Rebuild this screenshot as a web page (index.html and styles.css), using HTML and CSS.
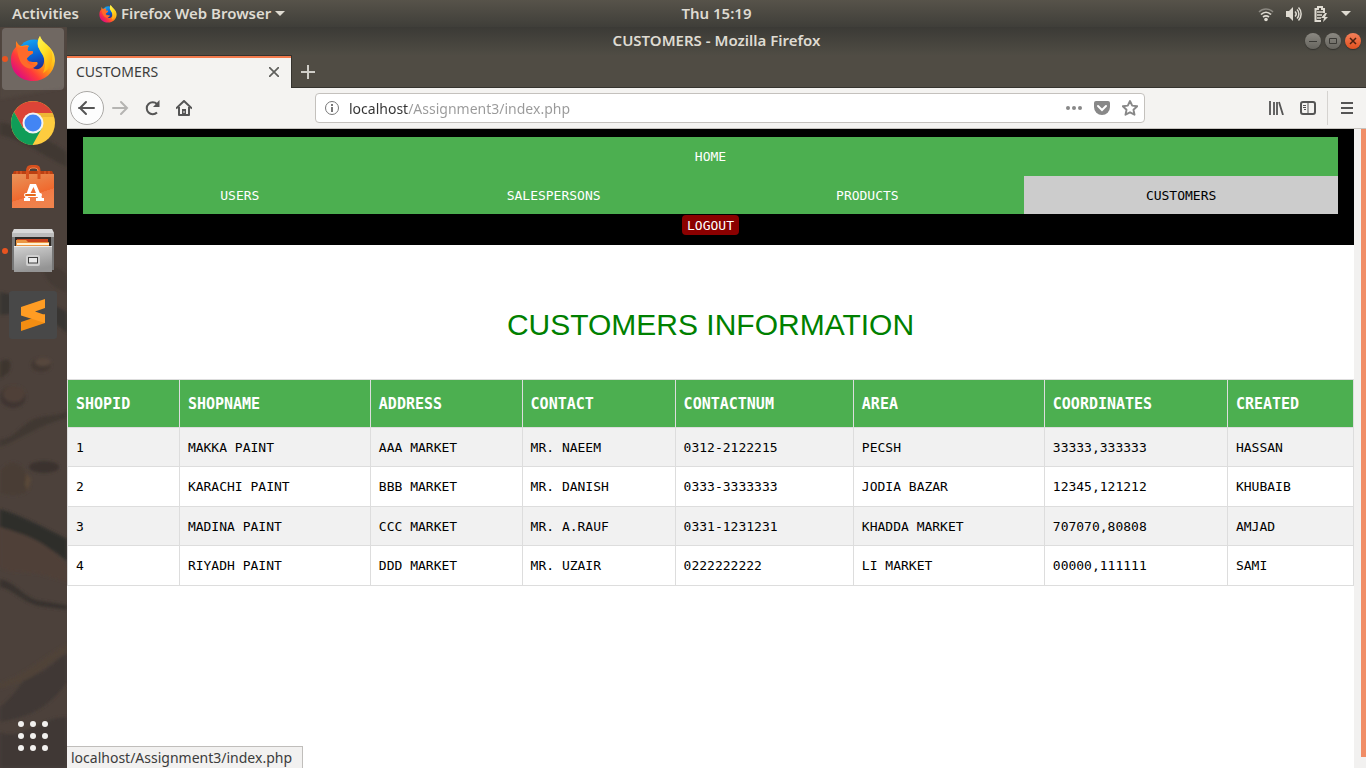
FILE: index.html
```html
<!DOCTYPE html>
<html lang="en">
<head>
<meta charset="utf-8">
<title>CUSTOMERS</title>
<link rel="stylesheet" href="styles.css">
</head>
<body>
<svg class="defs" aria-hidden="true">
  <defs>
    <linearGradient id="foxBody" x1="0.9" y1="0.1" x2="0.15" y2="0.85">
      <stop offset="0" stop-color="#fff04a"/><stop offset="0.3" stop-color="#ffc31a"/><stop offset="0.52" stop-color="#ff8a16"/><stop offset="0.75" stop-color="#ff3b3a"/><stop offset="1" stop-color="#e0107a"/>
    </linearGradient>
    <linearGradient id="foxTail" x1="0" y1="0" x2="0.6" y2="1">
      <stop offset="0" stop-color="#fff65a"/><stop offset="0.5" stop-color="#ffe226"/><stop offset="1" stop-color="#ffa90f"/>
    </linearGradient>
    <linearGradient id="globe" x1="0.3" y1="0" x2="0.6" y2="1">
      <stop offset="0" stop-color="#12a5f5"/><stop offset="0.5" stop-color="#0a5fd0"/><stop offset="1" stop-color="#2b1a78"/>
    </linearGradient>
    <linearGradient id="bag" x1="0" y1="0" x2="0.4" y2="1">
      <stop offset="0" stop-color="#e8945a"/><stop offset="0.7" stop-color="#f0692e"/><stop offset="0.71" stop-color="#f27a45"/><stop offset="1" stop-color="#f0824c"/>
    </linearGradient>
    <linearGradient id="metal" x1="0" y1="0" x2="0.3" y2="1">
      <stop offset="0" stop-color="#d2d2d2"/><stop offset="1" stop-color="#949494"/>
    </linearGradient>
    <filter id="soft"><feGaussianBlur stdDeviation="1.5"/></filter>
    <symbol id="firefox" viewBox="0 0 46 46">
      <circle cx="24" cy="21" r="17.5" fill="url(#globe)"/>
      <path d="M6 5C8 8 9 10 12 10C15 9 18 9 19 10C17 12 17 14 18 15L22 15C24 16 23 18 20 19L17 22C17 25 20 26 24 26L27 26C29 28 26 31 22 31C27 36 35 32 34 23C34 19 31 14 28 11C27 7 28 3 30 0C31 4 35 7 38 10C43 14 45 19 45 25C44 37 35 45 23 45C10 45 1 36 1 24C1 18 3 14 6 11Z" fill="url(#foxBody)"/>
      <path d="M30 0C31 4 35 7 38 10C42 14 43 18 42 24C41 31 37 35 33 37C36 31 36 24 32 18C28 12 26 6 30 0Z" fill="url(#foxTail)"/>
      <path d="M7 13C9 11 14 10 19 10C17 12 17 14 18 15L22 15C24 16 23 18 20 19L17 22C16 27 20 30 26 29C25 33 17 34 13 29C9 25 8 19 7 13Z" fill="#ff6a2a"/>
    </symbol>
  </defs>
</svg>

<div class="desktop">
  <header class="panel">
    <div class="panel-left">
      <button class="panel-btn">Activities</button>
      <button class="panel-btn app-menu">
        <svg width="18" height="18"><use href="#firefox"/></svg>
        Firefox Web Browser
        <svg width="10" height="5" viewBox="0 0 10 5"><path d="M0 0h10L5 5z" fill="#dfdbd2"/></svg>
      </button>
    </div>
    <button class="panel-btn clock">Thu 15:19</button>
    <div class="tray">
      <svg width="16" height="16" viewBox="0 0 16 16" fill="none" stroke="#dfdbd2" stroke-width="2"><path d="M1 6C5 2 11 2 15 6" stroke="#8b8881" stroke-width="1.5"/><path d="M3 8.500C6 5.500 10 5.500 13 8.500M5 11C7 9.500 9 9.500 11 11" stroke-width="1.700"/><circle cx="8" cy="13.500" r="1.800" fill="#dfdbd2" stroke="none"/></svg>
      <svg width="16" height="16" viewBox="0 0 16 16" fill="none" stroke="#dfdbd2" stroke-width="1.500"><path d="M0 5h3l4-4v14l-4-4H0z" fill="#dfdbd2" stroke="none"/><path d="M9 5.500C10.500 7 10.500 9 9 10.500M11 3.500C13.500 6 13.500 10 11 12.500M12.500 1.500C16 5 16 11 12.500 14.500"/></svg>
      <svg width="15" height="16" viewBox="0 0 15 16" fill="none" stroke="#dfdbd2" stroke-width="2"><path d="M10 7V3H8V1H4v2H1.500V15H7"/><path d="M3 6h6M3 9h5M3 12h4" stroke-width="1.500"/><path d="M11 7l-4 5h3l-1 4 5-5h-3l2-4z" fill="#dfdbd2" stroke="none"/></svg>
      <svg width="10" height="5" viewBox="0 0 10 5"><path d="M0 0h10L5 5z" fill="#dfdbd2"/></svg>
    </div>
  </header>

  <div class="workspace">
    <nav class="dock" aria-label="Launcher">
      <svg class="wallpaper" viewBox="0 0 67 741" preserveAspectRatio="none" aria-hidden="true">
        <rect width="67" height="741" fill="#4c413b"/>
        <g filter="url(#soft)">
          <path d="M0 0H67V60L0 72Z" fill="#514640"/>
          <path d="M0 95C25 100 45 110 67 125V140C45 130 20 112 0 108Z" fill="#403833"/>
          <path d="M0 265C14 270 26 262 67 285V306C48 288 25 285 0 288Z" fill="#393630"/>
          <path d="M42 238C52 240 65 240 67 250V265C55 262 45 255 42 238Z" fill="#443a34"/>
          <path d="M0 335C6 330 14 332 9 345L0 352Z" fill="#3d352f"/>
          <ellipse cx="41" cy="338" rx="10" ry="7" fill="#433832"/><ellipse cx="43" cy="335" rx="8" ry="4" fill="#56473e"/>
          <ellipse cx="13" cy="370" rx="13" ry="11" fill="#3f3630"/><ellipse cx="14" cy="367" rx="11" ry="8" fill="#4f4138"/>
          <path d="M0 412C14 414 22 394 40 390C52 388 62 388 67 384V391C40 397 20 413 0 420Z" fill="#413731"/>
          <ellipse cx="44" cy="440" rx="15" ry="6" fill="#3a322d"/>
          <path d="M0 444C12 430 20 434 28 450S18 472 0 466Z" fill="#483c35"/>
          <path d="M26 446L31 452 28 464 25 458Z" fill="#5a4839"/>
          <path d="M0 482C20 488 48 502 67 512V534C48 518 20 506 0 500Z" fill="#2f2f2a"/>
          <path d="M0 500C26 508 48 514 67 540V555L40 547C25 544 12 548 0 540Z" fill="#4f4037"/>
          <path d="M0 552C18 556 24 572 42 574L67 578V583L38 579C22 575 12 562 0 560Z" fill="#39332f"/>
          <path d="M0 680C24 660 16 655 35 648C50 642 56 632 67 627V655C50 680 30 690 0 695Z" fill="#3f3734"/>
          <path d="M67 625C50 634 45 643 28 652L0 662V656C25 648 40 632 67 617Z" fill="#504239"/>
          <path d="M0 705C20 715 40 690 67 690V741H0Z" fill="#413935"/>
        </g>
      </svg>
      <button class="dock-item active running" aria-label="Firefox"><svg width="46" height="46"><use href="#firefox"/></svg></button>
      <button class="dock-item" aria-label="Chrome">
        <svg width="46" height="46" viewBox="0 0 46 46">
          <circle cx="23" cy="23" r="22" fill="#fecc3f"/>
          <path d="M4 12A22 22 0 0 1 42.500 13H23L13 28Z" fill="#dc4437"/>
          <path d="M4 12A22 22 0 0 0 22.500 45L32 28 13 28Z" fill="#109d58"/>
          <path d="M23 13H42.500L44 17 30 17Z" fill="#e2a92e" opacity=".6"/>
          <circle cx="23" cy="23" r="10.500" fill="#f3f3f3"/><circle cx="23" cy="23" r="8.500" fill="#4285f4"/>
        </svg>
      </button>
      <button class="dock-item" aria-label="Ubuntu Software">
        <svg width="46" height="46" viewBox="0 0 46 46">
          <path d="M4 7H42L44 11H2Z" fill="#bb3f12"/><path d="M7 7V11M11 7V11M35 7V11M39 7V11" stroke="#e6632d"/>
          <path d="M2 10H44V44H2Z" fill="url(#bag)"/>
          <path d="M17.500 15V7Q17.500 2.500 21 2.500H26Q29 2.500 29 7V15" fill="none" stroke="#d6501e" stroke-width="3"/>
          <path d="M19 7Q19 4 22 4H25Q28 4 28 7" fill="none" stroke="#f08550"/>
          <path d="M20 20H26L32 34H34V37H26V34H28L23.500 23 18 34H20V37H14V34H15Z" fill="#fff"/>
          <rect x="14" y="29" width="18" height="4" rx="2" fill="#fff"/><rect x="15" y="30" width="11" height="2" rx="1" fill="#e56a19"/>
        </svg>
      </button>
      <button class="dock-item running" aria-label="Files">
        <svg width="46" height="46" viewBox="0 0 46 46">
          <path d="M4 1H42L44 5V42H2V5Z" fill="#777"/><path d="M4 1H42L44 5H2Z" fill="#d8d8d8"/><path d="M2 5H44V9H2Z" fill="#bcbcbc"/>
          <rect x="5" y="9" width="36" height="13" fill="#2d2926"/>
          <path d="M7 11H38V20H6Z" fill="#c8421c"/><path d="M6 12H16L18 14H39V20H6Z" fill="#eb9642"/><path d="M7 15H39V17H7Z" fill="#fff1d5"/>
          <path d="M4 18H42V44H4Z" fill="url(#metal)"/><path d="M4 18.500H42" stroke="#eee"/>
          <rect x="16" y="27" width="14" height="11" rx="2" fill="#d0d0d0"/><rect x="18.500" y="29.500" width="9" height="5.500" fill="#e8e8e8" stroke="#404040"/>
        </svg>
      </button>
      <button class="dock-item" aria-label="Sublime Text">
        <svg width="48" height="48" viewBox="0 0 48 48">
          <rect width="48" height="48" rx="3" fill="#484848"/>
          <path d="M12 31L36 23V32L12 40Z" fill="#f28d12"/><path d="M12 16L36 8V17L26 20.500 36 24V32L12 24.500Z" fill="#ff9c23"/>
        </svg>
      </button>
      <button class="dock-item apps" aria-label="Show Applications">
        <svg width="30" height="30" viewBox="0 0 30 30" fill="#f2f1ef"><circle cx="3" cy="3" r="3"/><circle cx="15" cy="3" r="3"/><circle cx="27" cy="3" r="3"/><circle cx="3" cy="15" r="3"/><circle cx="15" cy="15" r="3"/><circle cx="27" cy="15" r="3"/><circle cx="3" cy="27" r="3"/><circle cx="15" cy="27" r="3"/><circle cx="27" cy="27" r="3"/></svg>
      </button>
    </nav>

    <section class="window">
      <div class="titlebar">
        <span class="window-title">CUSTOMERS - Mozilla Firefox</span>
        <div class="window-controls">
          <button class="ctl" aria-label="Minimize"><svg width="16" height="16" stroke="#3b3a36"><path d="M4 8.500h8"/></svg></button>
          <button class="ctl" aria-label="Maximize"><svg width="16" height="16" stroke="#3b3a36" fill="none"><path d="M4.500 5.500h7v5h-7z"/></svg></button>
          <button class="ctl close" aria-label="Close"><svg width="16" height="16" stroke="#4a2010" stroke-width="1.500"><path d="M5 5l6 6M11 5l-6 6"/></svg></button>
        </div>
      </div>
      <div class="tabstrip">
        <div class="tab">
          <span>CUSTOMERS</span>
          <button class="icon-btn" aria-label="Close tab"><svg width="10" height="10" stroke="#5f5f5c" stroke-width="1.700"><path d="M0 0l10 10M10 0L0 10"/></svg></button>
        </div>
        <button class="icon-btn new-tab" aria-label="New tab"><svg width="14" height="14" stroke="#d0cec8" stroke-width="2"><path d="M7 0v14M0 7h14"/></svg></button>
      </div>
      <div class="toolbar">
        <button class="icon-btn back" aria-label="Back"><svg width="18" height="16" fill="none" stroke="#555" stroke-width="2"><path d="M1 8h15M8 2L2 8l6 6" stroke-linecap="round"/></svg></button>
        <button class="icon-btn tool" aria-label="Forward"><svg width="18" height="16" fill="none" stroke="#b5b4b2" stroke-width="2"><path d="M2 8h14M10 2l6 6-6 6" stroke-linecap="round"/></svg></button>
        <button class="icon-btn tool" aria-label="Reload"><svg width="16" height="16" fill="none" stroke="#555" stroke-width="2"><path d="M13 12.500A6 6 0 1 1 13 4"/><path d="M15.500 0v7H9z" fill="#555" stroke="none"/></svg></button>
        <button class="icon-btn tool" aria-label="Home"><svg width="16" height="16" fill="none" stroke="#555" stroke-width="2"><path d="M0 8.500L8 1l8 7.500M3 7v8h10V7" stroke-linejoin="round"/><path d="M6 9h4v6H6z" fill="#555" stroke="none"/><path d="M8 11v2" stroke="#eee" stroke-width="1"/></svg></button>
        <span class="spring"></span>
        <div class="urlbar">
          <svg width="14" height="14" fill="none" stroke="#777"><circle cx="7" cy="7" r="6.500"/><path d="M7 6v5M7 3v2" stroke-width="2"/></svg>
          <input class="url" type="text" aria-label="Address" value="localhost/Assignment3/index.php">
          <svg width="16" height="4" fill="#888"><circle cx="2" cy="2" r="2"/><circle cx="8" cy="2" r="2"/><circle cx="14" cy="2" r="2"/></svg>
          <svg width="16" height="14" viewBox="0 0 16 14"><path d="M2 0h12q2 0 2 2v4a8 8 0 0 1-16 0V2q0-2 2-2z" fill="#888"/><path d="M4 5l4 4 4-4" fill="none" stroke="#fff" stroke-width="2" stroke-linecap="round"/></svg>
          <svg width="16" height="16" viewBox="0 0 16 16"><path d="M8 1l2.200 4.600 5 .600-3.700 3.500 1 5L8 12.300l-4.500 2.400 1-5L.8 6.200l5-.6z" fill="none" stroke="#888" stroke-width="1.900" stroke-linejoin="round"/></svg>
        </div>
        <span class="spring"></span>
        <button class="icon-btn tool" aria-label="Library"><svg width="16" height="14" stroke="#555" stroke-width="2"><path d="M2 0v14M6 1v13M9 1v13M11 1L15 14" stroke-width="1.800"/></svg></button>
        <button class="icon-btn tool" aria-label="Sidebars"><svg width="16" height="14" fill="none" stroke="#555" stroke-width="2"><rect x="1" y="1" width="14" height="12" rx="2"/><path d="M8 1v12M3 4.500h3M3 6.500h3M4 8.500h2" stroke-width="1"/></svg></button>
        <span class="divider"></span>
        <button class="icon-btn tool" aria-label="Menu"><svg width="12" height="12" stroke="#555" stroke-width="2"><path d="M0 1h12M0 6h12M0 11h12"/></svg></button>
      </div>

      <div class="viewport">
        <main class="page">
          <header class="site-header">
            <nav class="site-nav">
              <a class="home" href="#">HOME</a>
              <a href="#">USERS</a>
              <a href="#">SALESPERSONS</a>
              <a href="#">PRODUCTS</a>
              <a class="current" href="#">CUSTOMERS</a>
            </nav>
            <button class="logout">LOGOUT</button>
          </header>
          <h2>CUSTOMERS INFORMATION</h2>
          <table class="customers">
            <colgroup><col class="c-id"><col class="c-name"><col class="c-address"><col class="c-contact"><col class="c-num"><col class="c-area"><col class="c-coord"><col></colgroup>
            <thead><tr><th>SHOPID</th><th>SHOPNAME</th><th>ADDRESS</th><th>CONTACT</th><th>CONTACTNUM</th><th>AREA</th><th>COORDINATES</th><th>CREATED</th></tr></thead>
            <tbody>
              <tr><td>1</td><td>MAKKA PAINT</td><td>AAA MARKET</td><td>MR. NAEEM</td><td>0312-2122215</td><td>PECSH</td><td>33333,333333</td><td>HASSAN</td></tr>
              <tr><td>2</td><td>KARACHI PAINT</td><td>BBB MARKET</td><td>MR. DANISH</td><td>0333-3333333</td><td>JODIA BAZAR</td><td>12345,121212</td><td>KHUBAIB</td></tr>
              <tr><td>3</td><td>MADINA PAINT</td><td>CCC MARKET</td><td>MR. A.RAUF</td><td>0331-1231231</td><td>KHADDA MARKET</td><td>707070,80808</td><td>AMJAD</td></tr>
              <tr><td>4</td><td>RIYADH PAINT</td><td>DDD MARKET</td><td>MR. UZAIR</td><td>0222222222</td><td>LI MARKET</td><td>00000,111111</td><td>SAMI</td></tr>
            </tbody>
          </table>
        </main>
        <div class="scrollbar"><div class="thumb"></div></div>
        <div class="status">localhost/Assignment3/index.php</div>
      </div>
    </section>
  </div>
</div>
</body>
</html>
```
FILE: styles.css
```css
* { box-sizing: border-box; }

body {
  margin: 0;
  font-family: "Noto Sans", "Open Sans", sans-serif;
  font-size: 14px;
  color: #3c3c3c;
}

button {
  margin: 0;
  padding: 0;
  border: 0;
  background: none;
  font: inherit;
  color: inherit;
}

svg { display: block; flex: none; }

.defs { position: absolute; width: 0; height: 0; }

.desktop {
  display: flex;
  flex-direction: column;
  height: 100vh;
  overflow: hidden;
}

/* Top panel */
.panel {
  display: grid;
  grid-template-columns: 1fr auto 1fr;
  align-items: center;
  height: 27px;
  background: linear-gradient(#57534a, #3f3e39);
  color: #dfdbd2;
  font-size: 15px;
  font-weight: 600;
}
.panel-left { display: flex; gap: 20px; padding-left: 12px; }
.panel-btn { line-height: 25px; white-space: nowrap; }
.app-menu { display: flex; align-items: center; gap: 4px; }
.clock { padding-left: 67px; }
.tray {
  display: flex;
  justify-content: flex-end;
  align-items: center;
  gap: 12px;
  padding-right: 15px;
}

.workspace { display: flex; flex: 1; min-height: 0; }

/* Launcher */
.dock {
  position: relative;
  display: flex;
  flex-direction: column;
  gap: 2px;
  width: 67px;
  padding: 1px 3px 1px 2px;
}
.wallpaper { position: absolute; inset: 0; width: 100%; height: 100%; }
.dock-item {
  position: relative;
  display: flex;
  align-items: center;
  justify-content: center;
  height: 62px;
  border-radius: 4px;
}
.dock-item.active { background: rgba(255, 255, 255, 0.18); }
.running::before {
  content: "";
  position: absolute;
  left: 0;
  width: 6px;
  height: 6px;
  border-radius: 50%;
  background: #e95420;
}
.apps { margin-top: auto; }

/* Browser window */
.window { display: flex; flex: 1; flex-direction: column; min-width: 0; }
.titlebar {
  position: relative;
  display: flex;
  align-items: center;
  justify-content: center;
  height: 28px;
  background: linear-gradient(#3b3a36, #4f4c44);
  color: #dfdbd2;
  font-size: 15px;
  font-weight: 600;
}
.window-title { padding-bottom: 2px; }
.window-controls { position: absolute; right: 5px; display: flex; gap: 4px; }
.ctl {
  width: 16px;
  height: 16px;
  border-radius: 50%;
  background: linear-gradient(#8b8982, #66645e);
  box-shadow: 0 1px 1px #33322e;
}
.ctl.close { background: linear-gradient(#f4805a, #e2511f); }

.tabstrip {
  display: flex;
  height: 33px;
  background: #504c44;
  box-shadow: inset 0 -1px #35332e;
}
.tab {
  display: flex;
  align-items: center;
  justify-content: space-between;
  width: 225px;
  padding: 0 12px 1px 9px;
  border-top: 1px solid #35332e;
  border-right: 1px solid #35332e;
  background: #f4f3f1;
  box-shadow: inset 0 2px #f27a4c;
}
.icon-btn { display: flex; align-items: center; justify-content: center; }
.new-tab { width: 32px; }

.toolbar {
  display: flex;
  align-items: center;
  height: 41px;
  padding: 0 3px;
  border-bottom: 1px solid #c6c3bf;
  background: #f4f3f1;
}
.back {
  width: 34px;
  height: 34px;
  border: 1px solid #aaa8a5;
  border-radius: 50%;
  background: #fdfdfd;
}
.tool { width: 32px; height: 32px; }
.spring { flex: 115; }
.urlbar {
  display: flex;
  flex: 813;
  align-items: center;
  gap: 12px;
  height: 30px;
  padding: 0 6px 0 9px;
  border: 1px solid #c4c1bd;
  border-radius: 4px;
  background: #fff;
}
.url {
  flex: 1;
  min-width: 0;
  margin-left: -2px;
  padding: 0;
  border: 0;
  outline: 0;
  font: inherit;
  color: transparent;
  background: linear-gradient(90deg, #333 59px, #999 59px) text;
}
.divider { width: 1px; height: 34px; margin: 0 3px; background: #d5d3d0; }

/* Page */
.viewport { position: relative; display: flex; flex: 1; min-height: 0; background: #fff; }
.page { flex: 1; min-width: 0; color: #000; font-family: "DejaVu Sans Mono", monospace; font-size: 13px; }
.site-header {
  display: flex;
  flex-direction: column;
  align-items: center;
  gap: 1px;
  padding: 8px 16px 10px;
  background: #000;
}
.site-nav {
  display: grid;
  grid-template-columns: repeat(4, 1fr);
  align-self: stretch;
  background: #4caf50;
}
.site-nav a {
  padding: 9px 16px 7px;
  line-height: 22px;
  color: #fff;
  text-align: center;
  text-decoration: none;
}
.site-nav .home { grid-column: 1 / -1; padding: 8px 16px; line-height: 23px; }
.site-nav .current { background: #ccc; color: #000; }
.logout { padding: 1px 5px 0; border-radius: 4px; line-height: 19px; background: #8b0000; color: #fff; }

h2 {
  margin: 57px 0 32px;
  font: 30px/45px "Liberation Sans", Arial, sans-serif;
  color: green;
  text-align: center;
}

.customers { width: 100%; table-layout: fixed; border-collapse: collapse; }
.customers th, .customers td { padding: 0 8px; border: 1px solid #ddd; text-align: left; }
.customers th { height: 48px; background: #4caf50; color: #fff; font-size: 15px; }
.customers td { height: 39px; }
.customers tbody tr:nth-child(odd) { background: #f1f1f1; }
.customers tbody tr:nth-child(even) td { height: 40px; }
.c-id { width: 8.7%; }
.c-name, .c-area { width: 14.85%; }
.c-address { width: 11.8%; }
.c-contact { width: 11.9%; }
.c-num { width: 13.86%; }
.c-coord { width: 14.24%; }

.scrollbar { width: 12px; padding: 0 0 11px 7px; background: #f2f1f0; }
.thumb { height: 100%; background: #f08d66; }
.status {
  position: absolute;
  left: 0;
  bottom: 0;
  padding: 0 10px 0 4px;
  border: 1px solid #c0bebb;
  border-width: 1px 1px 0 0;
  background: #f2f1f0;
  line-height: 21px;
}
```
